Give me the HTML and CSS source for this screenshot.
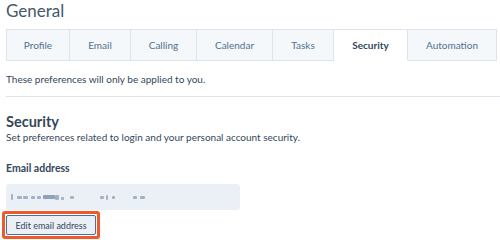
FILE: index.html
```html
<!DOCTYPE html>
<html>
<head>
<meta charset="utf-8">
<link rel="stylesheet" href="styles.css">
</head>
<body>
<div class="page">
  <h1 class="title">General</h1>
  <div class="tabs">
    <div class="tab t-profile">Profile</div>
    <div class="tab t-email">Email</div>
    <div class="tab t-calling">Calling</div>
    <div class="tab t-calendar">Calendar</div>
    <div class="tab t-tasks">Tasks</div>
    <div class="tab t-security active">Security</div>
    <div class="tab t-automation">Automation</div>
  </div>
  <p class="note">These preferences will only be applied to you.</p>
  <hr class="divider">
  <h2 class="section">Security</h2>
  <p class="sub">Set preferences related to login and your personal account security.</p>
  <div class="label">Email address</div>
  <div class="field">
    <span class="blur b1"></span><span class="blur b2"></span><span class="blur b3"></span><span class="blur b4"></span><span class="blur b5"></span><span class="blur b6"></span><span class="blur b7"></span><span class="blur b8"></span><span class="blur b9"></span><span class="blur b10"></span><span class="blur b11"></span><span class="blur b12"></span><span class="blur b13"></span><span class="blur b14"></span>
  </div>
  <div class="highlight"><button class="btn">Edit email address</button></div>
</div>
</body>
</html>
```
FILE: styles.css
```css
* { box-sizing: border-box; }
html, body { margin: 0; padding: 0; background: #fff; }
body {
  font-family: "Lato", "Noto Sans", sans-serif;
  color: #33475b;
  width: 500px;
  height: 240px;
  overflow: hidden;
}
.page { padding: 0 0 0 6px; }
.title {
  margin: 0;
  font-weight: 400;
  font-size: 17px;
  line-height: 22px;
  height: 29px;
  color: #44586c;
}
.tabs {
  display: flex;
  height: 32px;
  width: 491px;
}
.tab {
  display: flex;
  align-items: center;
  justify-content: center;
  background: #f5f8fa;
  border: 1px solid #dfe3eb;
  border-left: none;
  font-size: 10px;
  color: #516f90;
}
.tab:first-child { border-left: 1px solid #dfe3eb; }
.t-profile { width: 64px; }
.t-email { width: 61px; }
.t-calling { width: 66px; }
.t-calendar { width: 76px; }
.t-tasks { width: 61px; }
.t-security { width: 74px; }
.t-automation { width: 89px; }
.tab.active {
  background: #fff;
  border-bottom-color: #fff;
  font-weight: 700;
  color: #33475b;
}
.note {
  margin: 0;
  padding-top: 11px;
  font-size: 10px;
  line-height: 14px;
}
.divider {
  margin: 10px 0 0 0;
  border: none;
  border-top: 1px solid #dfe3eb;
  width: 494px;
}
.section {
  margin: 0;
  padding-top: 16px;
  font-size: 14.5px;
  line-height: 18px;
  font-weight: 700;
}
.sub {
  margin: 0;
  font-size: 10px;
  line-height: 13px;
}
.label {
  margin-top: 17px;
  font-size: 10.5px;
  line-height: 14px;
  font-weight: 700;
}
.field {
  margin-top: 9px;
  width: 234px;
  height: 26px;
  background: #eaf0f6;
  border-radius: 3px;
  display: flex;
  align-items: center;
}
.blur {
  display: inline-block;
  height: 3px;
  background: #a3b2c3;
  filter: blur(0.6px);
  border-radius: 1px;
}
.b1 { width: 2px; height: 6px; margin-left: 5px; }
.b2 { width: 5px; margin-left: 4px; }
.b3 { width: 5px; margin-left: 1px; }
.b4 { width: 4px; margin-left: 3px; }
.b5 { width: 4px; margin-left: 2px; }
.b6 { width: 12px; height: 4px; margin-left: 2px; background: #8fa1b6; }
.b7 { width: 4px; height: 5px; margin-left: 0; }
.b8 { width: 3px; margin-left: 2px; margin-top: 3px; }
.b9 { width: 4px; margin-left: 6px; }
.b10 { width: 4px; margin-left: 26px; }
.b11 { width: 2px; height: 5px; margin-left: 2px; }
.b12 { width: 3px; margin-left: 4px; }
.b13 { width: 4px; margin-left: 18px; }
.b14 { width: 5px; margin-left: 3px; }
.highlight {
  margin: 1px 0 0 -4px;
  width: 98px;
  height: 28px;
  border: 3px solid #f0592a;
  border-radius: 3px;
  padding: 1px;
}
.btn {
  display: block;
  width: 100%;
  height: 100%;
  background: #eaf0f6;
  border: 1px solid #516f90;
  border-radius: 2px;
  font-family: inherit;
  font-size: 9px;
  color: #33475b;
  padding: 0;
}
```
